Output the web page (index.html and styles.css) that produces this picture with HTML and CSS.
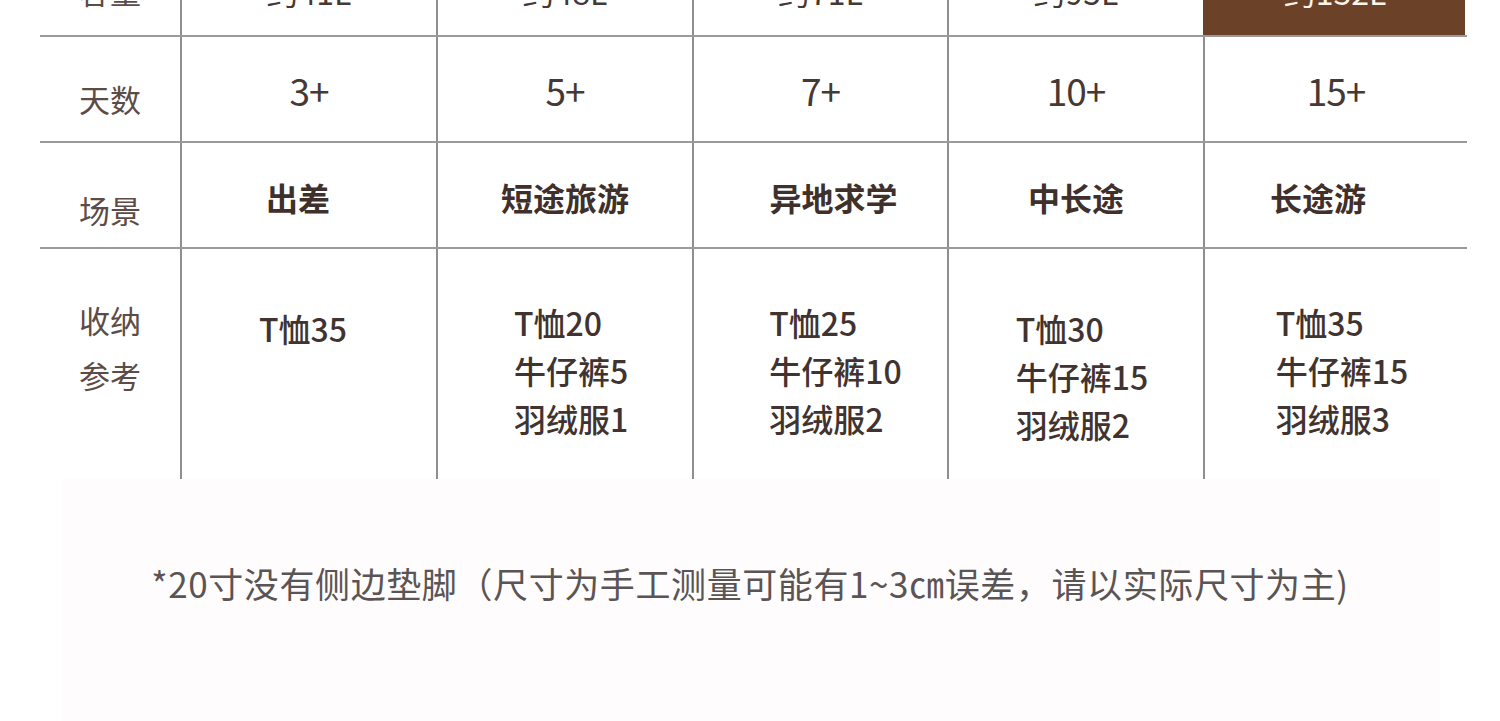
FILE: index.html
```html
<!DOCTYPE html>
<html lang="zh-CN">
<head>
<meta charset="utf-8">
<title>尺寸对照</title>
<link rel="stylesheet" href="styles.css">
</head>
<body>
<div class="sheet">
  <div class="table">
    <div class="row row-cap">
      <div class="cell label">容量</div>
      <div class="cell val">约41L</div>
      <div class="cell val">约48L</div>
      <div class="cell val">约71L</div>
      <div class="cell val">约95L</div>
      <div class="cell val cell-hl">约132L</div>
    </div>
    <div class="row row-days">
      <div class="cell label">天数</div>
      <div class="cell val">3+</div>
      <div class="cell val">5+</div>
      <div class="cell val">7+</div>
      <div class="cell val">10+</div>
      <div class="cell val">15+</div>
    </div>
    <div class="row row-scene">
      <div class="cell label">场景</div>
      <div class="cell val scene scene-l">出差</div>
      <div class="cell val scene">短途旅游</div>
      <div class="cell val scene scene-r">异地求学</div>
      <div class="cell val scene">中长途</div>
      <div class="cell val scene scene-ll">长途游</div>
    </div>
    <div class="row row-pack">
      <div class="cell label label-stack">收纳<br>参考</div>
      <div class="cell pack pack-low pack-first"><div class="list">T恤35</div></div>
      <div class="cell pack"><div class="list">T恤20<br>牛仔裤5<br>羽绒服1</div></div>
      <div class="cell pack pack-wide"><div class="list">T恤25<br>牛仔裤10<br>羽绒服2</div></div>
      <div class="cell pack pack-low"><div class="list">T恤30<br>牛仔裤15<br>羽绒服2</div></div>
      <div class="cell pack"><div class="list">T恤35<br>牛仔裤15<br>羽绒服3</div></div>
    </div>
  </div>
  <p class="note">*20寸没有侧边垫脚（尺寸为手工测量可能有1~3㎝误差，请以实际尺寸为主)</p>
</div>
</body>
</html>
```

FILE: styles.css
```css
html, body {
  margin: 0;
  padding: 0;
  background: #ffffff;
  overflow: hidden;
}

body {
  font-family: "Noto Sans CJK SC", "Noto Sans", sans-serif;
  color: #4a3b37;
}

.sheet {
  display: flow-root;
  margin: 0 60px 0 62px;
  min-height: 721px;
  background: #fefcfc;
}

.table {
  margin-left: -22px;
  margin-top: -69px;
  width: 1427px;
  background: #ffffff;
}

.row {
  display: grid;
  grid-template-columns: 140px 256px 256px 255px 256px 1fr;
  border-bottom: 2px solid #9a9a9a;
  height: 104px;
}

.row-pack {
  border-bottom: none;
  height: 230px;
}

.cell {
  border-left: 2px solid #8e8e8e;
  text-align: center;
  font-size: 32px;
  line-height: 40px;
}

.cell:first-child {
  border-left: none;
}

.label {
  color: #5c4b46;
  font-size: 31px;
}

.val {
  color: #463834;
}

.row-cap .cell {
  padding-top: 40px;
}

.cell-hl {
  background: #6b4128;
  border-left-color: #6b4128;
  color: #fff4ea;
  margin-right: 2px;
}

.row-days .val {
  padding-top: 33px;
  font-size: 37px;
  letter-spacing: -1px;
}

.row-days .label {
  padding-top: 42px;
}

.scene {
  font-weight: 600;
  padding-top: 34px;
  color: #3f302b;
}

.scene-l {
  padding-right: 22px;
}

.scene-ll {
  padding-right: 36px;
}

.scene-r {
  padding-left: 26px;
}

.row-scene .label {
  padding-top: 47px;
}

.label-stack {
  padding-top: 43px;
  line-height: 55px;
}

.pack {
  padding-top: 49px;
  padding-left: 12px;
}

.pack-low {
  padding-top: 55px;
}

.pack-first {
  padding-left: 0;
  padding-right: 12px;
}

.pack-wide {
  padding-left: 30px;
}

.list {
  display: inline-block;
  text-align: left;
  font-size: 32px;
  line-height: 48px;
  font-weight: 500;
  color: #413330;
}

.note {
  margin: 79px 0 0 -62px;
  width: 1500px;
  text-align: center;
  font-size: 35px;
  letter-spacing: 0.6px;
  line-height: 50px;
  color: #5b5454;
}
```
